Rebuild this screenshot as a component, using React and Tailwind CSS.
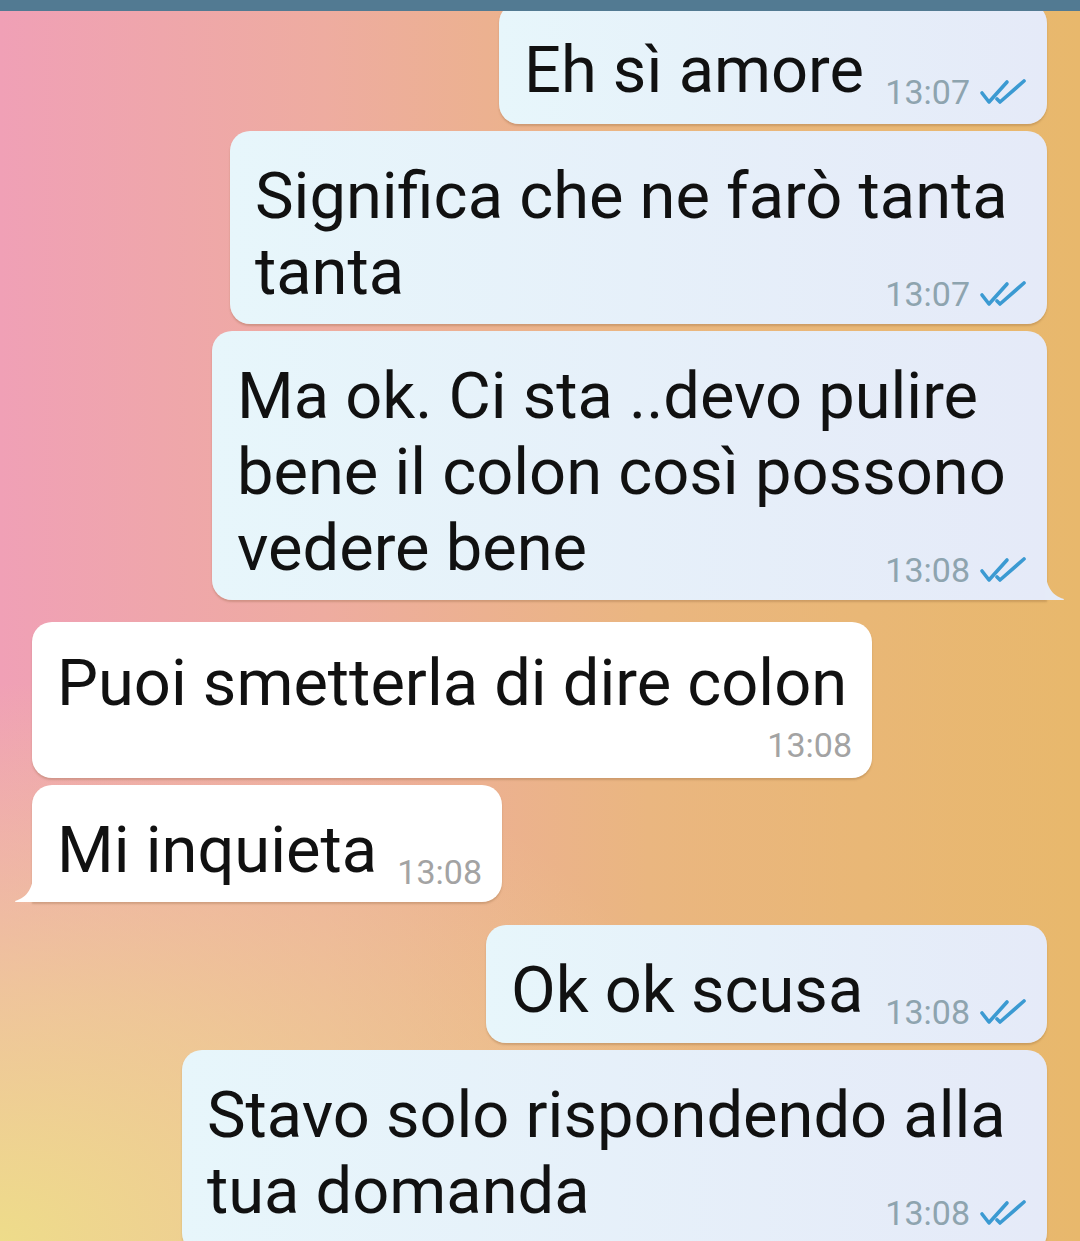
import React from 'react';

const Ticks = () => (
  <svg width="48" height="28" viewBox="0 0 48 28" fill="none" stroke="#3b9ad2" strokeWidth="3.6" strokeLinecap="round" strokeLinejoin="round" className="ml-[9px] mb-[6px]">
    <path d="M3 15 L10 24 L28 4" />
    <path d="M18 21 L21 24 L45 3" />
  </svg>
);

const Time = ({ t, out }) => (
  <span className={`flex items-end shrink-0 ${out ? 'text-[#8ea4af]' : 'text-[#a3a3a3]'}`}>
    <span className="text-[34px] leading-[40px]">{t}</span>
    {out && <Ticks />}
  </span>
);

const TailRight = () => (
  <svg width="20" height="32" viewBox="0 0 20 32" className="absolute bottom-0 right-[-18px]">
    <path d="M0 0 C1 18 6 27 19 31 C19 32 18 32 17 32 L0 32 Z" fill="#e5ebf8" />
  </svg>
);

const TailLeft = () => (
  <svg width="20" height="32" viewBox="0 0 20 32" className="absolute bottom-0 left-[-18px]">
    <path d="M20 0 C19 18 14 27 1 31 C1 32 2 32 3 32 L20 32 Z" fill="#ffffff" />
  </svg>
);

const Out = ({ w, lines, last, time, tail, extra = 'pt-[27px] pb-[10px]' }) => (
  <div
    className={`relative self-end mr-[33px] ${w} rounded-[20px] ${tail ? 'rounded-br-none' : ''} bg-gradient-to-r from-[#e7f6fb] to-[#e5eaf8] shadow-[0_2px_2px_rgba(120,80,40,0.25)] pl-[25px] pr-[20px] ${extra}`}
  >
    {lines.map((l) => (
      <div key={l} className="leading-[76px] whitespace-nowrap">{l}</div>
    ))}
    <div className="flex items-end justify-between gap-[20px]">
      <span className="leading-[76px] mb-[4px] whitespace-nowrap">{last}</span>
      <Time t={time} out />
    </div>
    {tail && <TailRight />}
  </div>
);

export default function App() {
  return (
    <div
      className="relative w-[1080px] h-[1241px] overflow-hidden text-[65px] text-[#111] bg-[radial-gradient(ellipse_70%_45%_at_0%_100%,#eedc8a_0%,rgba(238,220,138,0.6)_45%,rgba(238,220,138,0)_100%),linear-gradient(to_right,#f0a0b6_0%,#eeaca0_30%,#eab680_60%,#e8b86c_100%)]"
      style={{ fontFamily: 'Roboto, "Noto Sans", sans-serif' }}
    >
      <div className="absolute top-0 inset-x-0 h-[11px] bg-[#527a92] z-10" />

      <div className="flex flex-col pt-[3px]">
        <Out w="w-[548px]" lines={[]} last="Eh sì amore" time="13:07" extra="pt-[29px] pb-[12px]" />
        <Out w="w-[817px]" lines={['Significa che ne farò tanta']} last="tanta" time="13:07" extra="mt-[7px] pt-[27px] pb-[10px]" />
        <Out
          w="w-[835px]"
          lines={['Ma ok. Ci sta ..devo pulire', 'bene il colon così possono']}
          last="vedere bene"
          time="13:08"
          tail
          extra="mt-[7px] pt-[27px] pb-[10px]"
        />

        <div className="self-start ml-[32px] mt-[22px] w-[840px] rounded-[20px] bg-white shadow-[0_2px_2px_rgba(120,80,40,0.25)] pl-[25px] pr-[20px] pt-[23px] pb-[13px]">
          <div className="leading-[76px] whitespace-nowrap">Puoi smetterla di dire colon</div>
          <div className="flex justify-end mt-[4px]">
            <Time t="13:08" />
          </div>
        </div>

        <div className="relative self-start ml-[32px] mt-[7px] w-[470px] rounded-[20px] rounded-bl-none bg-white shadow-[0_2px_2px_rgba(120,80,40,0.25)] pl-[25px] pr-[20px] pt-[27px] pb-[10px]">
          <div className="flex items-end justify-between gap-[20px]">
            <span className="leading-[76px] mb-[4px] whitespace-nowrap">Mi inquieta</span>
            <Time t="13:08" />
          </div>
          <TailLeft />
        </div>

        <Out w="w-[561px]" lines={[]} last="Ok ok scusa" time="13:08" extra="mt-[23px] pt-[27px] pb-[11px]" />
        <Out
          w="w-[865px]"
          lines={['Stavo solo rispondendo alla']}
          last="tua domanda"
          time="13:08"
          extra="mt-[7px] pt-[27px] pb-[20px]"
        />
      </div>
    </div>
  );
}
